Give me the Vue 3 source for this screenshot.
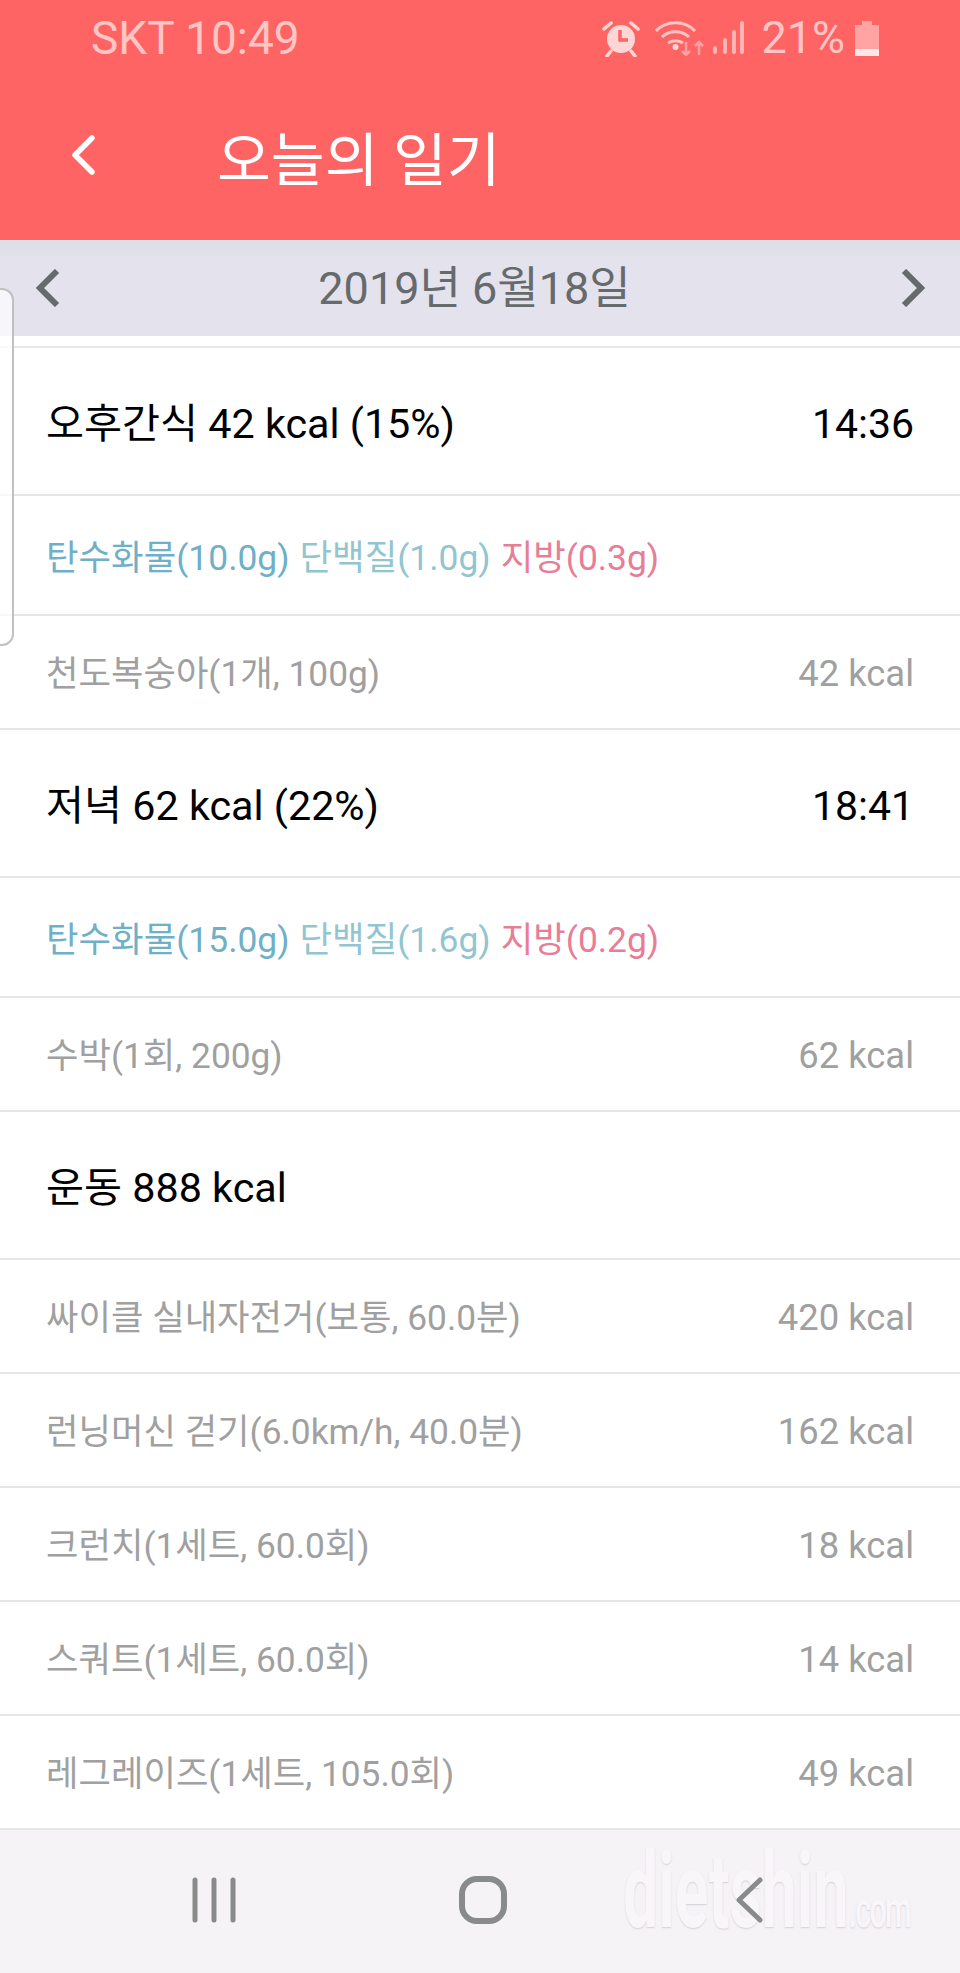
<script setup>
const sections = [
  {
    title: '오후간식 42 kcal (15%)',
    time: '14:36',
    macros: { carb: '탄수화물(10.0g)', protein: '단백질(1.0g)', fat: '지방(0.3g)' },
    items: [{ name: '천도복숭아(1개, 100g)', kcal: '42 kcal' }],
  },
  {
    title: '저녁 62 kcal (22%)',
    time: '18:41',
    macros: { carb: '탄수화물(15.0g)', protein: '단백질(1.6g)', fat: '지방(0.2g)' },
    items: [{ name: '수박(1회, 200g)', kcal: '62 kcal' }],
  },
  {
    title: '운동 888 kcal',
    time: '',
    items: [
      { name: '싸이클 실내자전거(보통, 60.0분)', kcal: '420 kcal' },
      { name: '런닝머신 걷기(6.0km/h, 40.0분)', kcal: '162 kcal' },
      { name: '크런치(1세트, 60.0회)', kcal: '18 kcal' },
      { name: '스쿼트(1세트, 60.0회)', kcal: '14 kcal' },
      { name: '레그레이즈(1세트, 105.0회)', kcal: '49 kcal' },
    ],
  },
];
</script>

<template>
  <div class="page">
    <header class="header">
      <div class="status">
        <span class="carrier">SKT 10:49</span>
        <div class="status-right">
          <svg class="ic-alarm" width="38" height="37" viewBox="0 0 38 37">
            <circle cx="19" cy="19" r="14" fill="#ffd6d6" />
            <path d="M18 10v10h8" fill="none" stroke="#ff6464" stroke-width="3.5" />
            <path d="M2 9 9 3M36 9l-7-6M9 31l-4 5M29 31l4 5" stroke="#ffd6d6" stroke-width="3.5" stroke-linecap="round" />
          </svg>
          <svg class="ic-wifi" width="49" height="36" viewBox="0 0 49 36">
            <path d="M1 11C11 0 30 0 40 11M7 17c7-7 20-7 27 0M13 23c4-3 11-3 15 0" fill="none" stroke="#ffc4c4" stroke-width="3" />
            <circle cx="20.500" cy="27" r="3" fill="#ffd6d6" />
            <path d="M31 22v13M27 31l4 4 4-4M44 35V22M40 26l4-4 4 4" fill="none" stroke="#ffa0a0" stroke-width="2.500" />
          </svg>
          <svg class="ic-signal" width="32" height="34" viewBox="0 0 32 34">
            <path d="M3 27v4M13 19v12M22 11v20M30 2v29" stroke="#ffb4b4" stroke-width="4" stroke-linecap="round" />
          </svg>
          <span class="percent">21%</span>
          <svg class="ic-battery" width="24" height="35" viewBox="0 0 24 35">
            <path d="M7 0h10v4h7v31H0V4h7z" fill="#ffa3a3" />
            <path d="M0 28h24v7H0z" fill="#ffe6e6" />
          </svg>
        </div>
      </div>
      <div class="title-bar">
        <svg class="back" width="28" height="40" viewBox="0 0 28 40">
          <path d="M24 3 7 20l17 17" fill="none" stroke="#fff" stroke-width="5.500" stroke-linecap="round" stroke-linejoin="round" />
        </svg>
        <h1 class="title">오늘의 일기</h1>
      </div>
    </header>

    <div class="date-bar">
      <svg width="26" height="38" viewBox="0 0 26 38">
        <path d="M22 2 5 19l17 17" fill="none" stroke="#666a6c" stroke-width="6" />
      </svg>
      <span class="date">2019년 6월18일</span>
      <svg width="26" height="38" viewBox="0 0 26 38">
        <path d="M4 2l17 17L4 36" fill="none" stroke="#666a6c" stroke-width="6" />
      </svg>
    </div>

    <main class="list">
      <div class="list-top"></div>
      <section v-for="s in sections" :key="s.title">
        <div class="row row-head">
          <span>{{ s.title }}</span>
          <span class="time">{{ s.time }}</span>
        </div>
        <div v-if="s.macros" class="row row-macro">
          <span class="carb">{{ s.macros.carb }}</span>
          <span class="protein">{{ s.macros.protein }}</span>
          <span class="fat">{{ s.macros.fat }}</span>
        </div>
        <div v-for="item in s.items" :key="item.name" class="row row-item">
          <span>{{ item.name }}</span>
          <span class="kcal">{{ item.kcal }}</span>
        </div>
      </section>
    </main>

    <nav class="nav">
      <div class="watermark">dietshin<small>.com</small></div>
      <svg class="nav-icon" width="44" height="46" viewBox="0 0 44 46">
        <path d="M3 3v40M22 3v40M41 3v40" stroke="#888b8a" stroke-width="5" stroke-linecap="round" />
      </svg>
      <svg class="nav-icon" width="48" height="48" viewBox="0 0 48 48">
        <rect x="3" y="3" width="42" height="42" rx="15" fill="none" stroke="#888b8a" stroke-width="6" />
      </svg>
      <svg class="nav-icon nav-back" width="30" height="46" viewBox="0 0 30 46">
        <path d="M26 3 5 23l21 20" fill="none" stroke="#888b8a" stroke-width="5" stroke-linecap="round" stroke-linejoin="round" />
      </svg>
    </nav>

    <div class="tab-handle"></div>
  </div>
</template>

<style scoped>
.page {
  position: relative;
  width: 960px;
  height: 1973px;
  overflow: hidden;
  background: #fff;
  font-family: Roboto, "Noto Sans CJK KR", sans-serif;
  display: flex;
  flex-direction: column;
}

.header {
  height: 240px;
  flex: none;
  background: #ff6464;
  display: flex;
  flex-direction: column;
}

.status {
  height: 76px;
  display: flex;
  justify-content: space-between;
  align-items: center;
  padding: 0 81px 0 91px;
  line-height: 50px;
}

.carrier {
  font-size: 46px;
  color: #ffc4c4;
}

.status-right {
  display: flex;
  align-items: center;
}

.ic-wifi {
  margin-left: 15px;
}

.ic-signal {
  margin-left: 8px;
}

.percent {
  margin-left: 17px;
  font-size: 45px;
  color: #ffc4c4;
}

.ic-battery {
  margin-left: 10px;
}

.title-bar {
  flex: 1;
  display: flex;
  align-items: center;
  padding-left: 68px;
}

.back {
  margin-bottom: 6px;
}

.title {
  margin: 6px 0 0 121px;
  font-size: 58.500px;
  font-weight: 400;
  line-height: 70px;
  color: #fff;
}

.date-bar {
  height: 96px;
  flex: none;
  background: linear-gradient(#dcdfe5 0, #dfe1e8 15px, #e3e2ed 16px);
  display: flex;
  align-items: center;
  justify-content: space-between;
  padding: 0 34px 0 35px;
  box-sizing: border-box;
}

.date {
  margin: 2px 12px 0 0;
  font-size: 45px;
  line-height: 56px;
  color: #666a6c;
}

.list {
  flex: 1;
}

.list-top {
  height: 12px;
  border-bottom: 2px solid #e8e8e8;
  box-sizing: border-box;
}

.row {
  display: flex;
  align-items: center;
  justify-content: space-between;
  padding: 4px 46px 0;
  border-bottom: 2px solid #e6e6e6;
  box-sizing: border-box;
}

.row-head {
  height: 148px;
  padding-top: 6px;
  font-size: 41.300px;
  line-height: 50px;
  color: #000;
}

.time {
  font-size: 41px;
}

.row-macro {
  height: 120px;
  padding-top: 6px;
  font-size: 35.400px;
  line-height: 46px;
  justify-content: flex-start;
  gap: 10px;
}

.carb {
  color: #6fb0c8;
}

.protein {
  color: #92c5cf;
}

.fat {
  color: #e87d96;
}

.row-item {
  height: 114px;
  font-size: 35.300px;
  line-height: 46px;
  color: #a0a0a0;
}

.kcal {
  font-size: 36.400px;
}

.nav {
  position: relative;
  height: 143px;
  flex: none;
  background: #f6f3f7;
  display: flex;
  align-items: center;
  padding: 0 0 4px 192px;
  gap: 223px;
  box-sizing: border-box;
}

.nav-icon {
  position: relative;
}

.nav-back {
  margin-left: 4px;
}

.tab-handle {
  position: absolute;
  left: -10px;
  top: 288px;
  width: 20px;
  height: 354px;
  border: 2px solid #c0c0c0;
  border-radius: 0 12px 12px 0;
  background: rgba(255, 255, 255, 0.7);
}

.watermark {
  position: absolute;
  left: 623px;
  top: 0;
  font-size: 106px;
  font-weight: 700;
  line-height: 122px;
  color: #f9f6f9;
  text-shadow: 0 1px 2px rgba(170, 165, 170, 0.45);
  transform: scaleX(0.59);
  transform-origin: left top;
  white-space: nowrap;
}

.watermark small {
  font-size: 52px;
  font-weight: 500;
  letter-spacing: -3px;
}
</style>
